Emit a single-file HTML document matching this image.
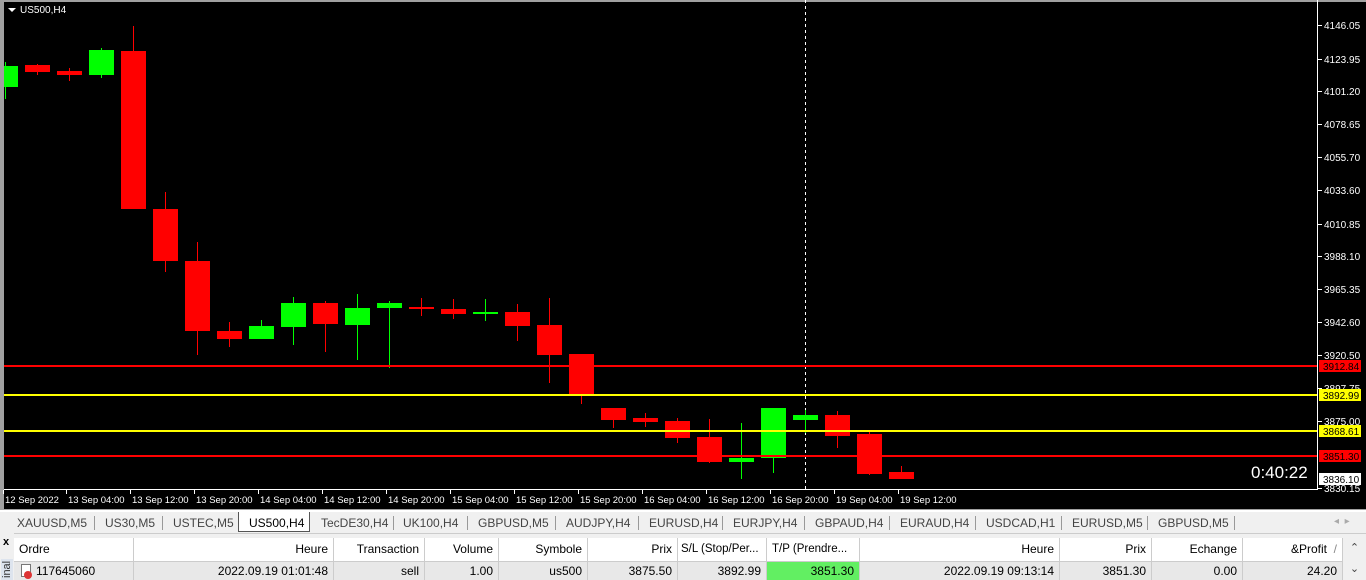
<!DOCTYPE html>
<html><head><meta charset="utf-8"><style>
*{margin:0;padding:0;box-sizing:border-box}
body{width:1366px;height:580px;overflow:hidden;background:#f0f0f0;font-family:"Liberation Sans",sans-serif;position:relative}
.ab{position:absolute}
.tab{position:absolute;top:516px;font-size:12px;color:#444}
.sep{position:absolute;top:516px;width:1px;height:14px;background:#999}
.h{position:absolute;top:538px;height:23px;font-size:12px;line-height:23px;color:#000;border-right:1px solid #ccc;padding:0 5px;background:#fff;white-space:nowrap;overflow:hidden}
.r{position:absolute;top:562px;height:18px;font-size:12px;line-height:18px;color:#000;border-right:1px solid #ccc;padding:0 5px;background:#e8e8e8;text-align:right}
</style></head><body>
<div class="ab" style="left:0;top:0;width:1366px;height:510px;background:#a0a0a0"></div>
<div class="ab" style="left:4px;top:2px;width:1362px;height:507px;background:#000"></div>
<svg class="ab" style="left:0;top:0" width="1366" height="510" font-family="Liberation Sans" font-size="10">
<g stroke="#fff" stroke-width="1" fill="none">
<line x1="1317.5" y1="0" x2="1317.5" y2="490"/>
<line x1="4" y1="489.5" x2="1317" y2="489.5"/>
<line x1="805.5" y1="0" x2="805.5" y2="489" stroke-dasharray="3,3"/>
</g>
<polygon points="8,8 16,8 12,12" fill="#fff"/>
<text x="20" y="13" fill="#fff">US500,H4</text>
<g id="wicks" stroke-width="1"></g>
<g id="c"></g>
<rect x="4" y="365" width="1313" height="2" fill="#f00"/>
<rect x="4" y="394" width="1313" height="2" fill="#ff0"/>
<rect x="4" y="430" width="1313" height="2" fill="#ff0"/>
<rect x="4" y="455" width="1313" height="2" fill="#f00"/>
<g fill="#fff" id="pl"></g>
<rect x="1319" y="360" width="42" height="12" fill="#f00"/><text x="1323" y="370" fill="#000">3912.84</text>
<rect x="1319" y="389" width="42" height="12" fill="#ff0"/><text x="1323" y="399" fill="#000">3892.99</text>
<rect x="1319" y="425" width="42" height="12" fill="#ff0"/><text x="1323" y="435" fill="#000">3868.61</text>
<rect x="1319" y="450" width="42" height="12" fill="#f00"/><text x="1323" y="460" fill="#000">3851.30</text>
<rect x="1319" y="473" width="42" height="12" fill="#fff"/><text x="1323" y="483" fill="#000">3836.10</text>
<text x="1251" y="478" fill="#fff" font-size="17">0:40:22</text>
<g id="tl" fill="#fff" font-size="9.5"></g>
</svg>
<script>
var ns="http://www.w3.org/2000/svg";
function el(p,t,a,txt){var e=document.createElementNS(ns,t);for(var k in a)e.setAttribute(k,a[k]);if(txt)e.textContent=txt;document.getElementById(p).appendChild(e);}
var C=[[5.5,'g',66,87,62,99],[37.5,'r',65,72,64,75],[69.5,'r',71,75,68,81],[101.5,'g',50,75,48,78],[133.5,'r',51,209,26,209],[165.5,'r',209,261,192,272],[197.5,'r',261,331,242,355],[229.5,'r',331,339,322,347],[261.5,'g',326,339,320,339],[293.5,'g',303,327,297,345],[325.5,'r',303,324,301,352],[357.5,'g',308,325,294,360],[389.5,'g',303,308,301,368],[421.5,'r',307,309,298,316],[453.5,'r',309,314,299,319],[485.5,'g',312,314,299,321],[517.5,'r',312,326,304,341],[549.5,'r',325,355,298,383],[581.5,'r',354,396,354,404],[613.5,'r',408,420,408,428],[645.5,'r',418,422,413,427],[677.5,'r',421,438,418,443],[709.5,'r',437,462,419,463],[741.5,'g',458,462,423,479],[773.5,'g',408,458,408,473],[805.5,'g',415,420,410,433],[837.5,'r',415,436,411,448],[869.5,'r',434,474,431,475],[901.5,'r',472,479,466,479]];
C.forEach(function(c){var col=c[1]=='g'?'#0f0':'#f00';var x0=Math.max(4,c[0]-12.5);el('wicks','line',{x1:c[0],x2:c[0],y1:c[4],y2:c[5],stroke:col});el('c','rect',{x:x0,y:c[2],width:c[0]+12.5-x0,height:Math.max(2,c[3]-c[2]),fill:col});});
var P=[['4146.05',25],['4123.95',59],['4101.20',91],['4078.65',124],['4055.70',157],['4033.60',190],['4010.85',224],['3988.10',256],['3965.35',289],['3942.60',322],['3920.50',355],['3897.75',388],['3875.00',421],['3830.15',488]];
P.forEach(function(p){el('pl','rect',{x:1318,y:p[1],width:4,height:1});el('pl','text',{x:1324,y:p[1]+4},p[0]);});
var T=['12 Sep 2022','13 Sep 04:00','13 Sep 12:00','13 Sep 20:00','14 Sep 04:00','14 Sep 12:00','14 Sep 20:00','15 Sep 04:00','15 Sep 12:00','15 Sep 20:00','16 Sep 04:00','16 Sep 12:00','16 Sep 20:00','19 Sep 04:00','19 Sep 12:00'];
T.forEach(function(t,i){var x=i==0?5:68+64*(i-1);el('tl','rect',{x:x-2,y:490,width:1,height:4});el('tl','text',{x:x,y:503},t);});
</script>
<div class="ab" style="left:0;top:510px;width:1366px;height:2px;background:#fff"></div>
<div class="ab" style="left:0;top:512px;width:1366px;height:21px;background:#f0f0f0"></div>
<div class="ab" style="left:238px;top:512px;width:72px;height:20px;background:#fff;border:1px solid #555;border-top:none"></div>
<div class="tab" style="left:17px">XAUUSD,M5</div><div class="sep" style="left:94px"></div>
<div class="tab" style="left:105px">US30,M5</div><div class="sep" style="left:162px"></div>
<div class="tab" style="left:173px">USTEC,M5</div>
<div class="tab" style="left:249px;color:#000">US500,H4</div>
<div class="tab" style="left:321px">TecDE30,H4</div><div class="sep" style="left:393px"></div>
<div class="tab" style="left:403px">UK100,H4</div><div class="sep" style="left:467px"></div>
<div class="tab" style="left:478px">GBPUSD,M5</div><div class="sep" style="left:555px"></div>
<div class="tab" style="left:566px">AUDJPY,H4</div><div class="sep" style="left:638px"></div>
<div class="tab" style="left:649px">EURUSD,H4</div><div class="sep" style="left:722px"></div>
<div class="tab" style="left:733px">EURJPY,H4</div><div class="sep" style="left:804px"></div>
<div class="tab" style="left:815px">GBPAUD,H4</div><div class="sep" style="left:889px"></div>
<div class="tab" style="left:900px">EURAUD,H4</div><div class="sep" style="left:975px"></div>
<div class="tab" style="left:986px">USDCAD,H1</div><div class="sep" style="left:1061px"></div>
<div class="tab" style="left:1072px">EURUSD,M5</div><div class="sep" style="left:1147px"></div>
<div class="tab" style="left:1158px">GBPUSD,M5</div><div class="sep" style="left:1234px"></div>
<div class="tab" style="left:1334px;color:#aaa;font-size:10px">◂ &nbsp;▸</div>
<div class="ab" style="left:0;top:533px;width:1366px;height:5px;background:#f0f0f0;border-top:1px solid #ccc"></div>
<div class="ab" style="left:0;top:533px;width:14px;height:47px;background:#f0f0f0"></div>
<div class="ab" style="left:3px;top:536px;font-size:11px;font-weight:bold">x</div>
<div class="ab" style="left:1px;top:580px;transform:rotate(-90deg);transform-origin:0 0;font-size:11px;color:#333;background:#dde4ee;padding:0 2px">inal</div>
<div class="h" style="left:14px;width:120px">Ordre</div>
<div class="h" style="left:134px;width:200px;text-align:right">Heure</div>
<div class="h" style="left:334px;width:91px;text-align:right">Transaction</div>
<div class="h" style="left:425px;width:74px;text-align:right">Volume</div>
<div class="h" style="left:499px;width:89px;text-align:right">Symbole</div>
<div class="h" style="left:588px;width:90px;text-align:right">Prix</div>
<div class="h" style="left:678px;width:89px;padding:0 3px;font-size:11.5px">S/L (Stop/Per...</div>
<div class="h" style="left:767px;width:93px;font-size:11.5px">T/P (Prendre...</div>
<div class="h" style="left:860px;width:200px;text-align:right">Heure</div>
<div class="h" style="left:1060px;width:92px;text-align:right">Prix</div>
<div class="h" style="left:1152px;width:91px;text-align:right">Echange</div>
<div class="h" style="left:1243px;width:100px;text-align:right">&amp;Profit &nbsp;<span style="color:#888">/</span></div>
<div class="ab" style="left:1343px;top:538px;width:23px;height:42px;background:#f0f0f0;font-size:11px;text-align:center;line-height:21px;color:#444">⌃<br>⌄</div>
<div class="ab" style="left:14px;top:561px;width:1329px;height:1px;background:#ccc"></div>
<div class="r" style="left:14px;width:120px;text-align:left;padding-left:22px">117645060</div>
<div class="ab" style="left:21px;top:564px;width:10px;height:13px;border:1px solid #777;background:#fff"></div>
<div class="ab" style="left:24px;top:571px;width:8px;height:8px;border-radius:50%;background:#d33"></div>
<div class="r" style="left:134px;width:200px">2022.09.19 01:01:48</div>
<div class="r" style="left:334px;width:91px">sell</div>
<div class="r" style="left:425px;width:74px">1.00</div>
<div class="r" style="left:499px;width:89px">us500</div>
<div class="r" style="left:588px;width:90px">3875.50</div>
<div class="r" style="left:678px;width:89px">3892.99</div>
<div class="r" style="left:767px;width:93px;background:#62ef62">3851.30</div>
<div class="r" style="left:860px;width:200px">2022.09.19 09:13:14</div>
<div class="r" style="left:1060px;width:92px">3851.30</div>
<div class="r" style="left:1152px;width:91px">0.00</div>
<div class="r" style="left:1243px;width:100px">24.20</div>
</body></html>
